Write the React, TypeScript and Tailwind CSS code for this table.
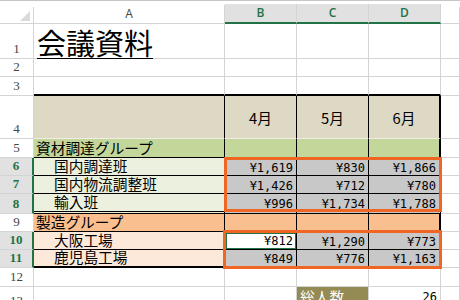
import type { ReactNode } from 'react';

// Excel-like sheet: 会議資料

const grid = 'border-r border-r-[#d4d4d4]';
const gridB = 'border-b border-b-[#d4d4d4]';
const blackR = 'border-r border-r-black';
const blackB = 'border-b border-b-black';
const thickR = 'border-r-2 border-r-black';

type CellProps = {
  w: string;
  r?: string;
  b?: string;
  bg?: string;
  className?: string;
  children?: ReactNode;
};

function Cell({ w, r = grid, b = gridB, bg = 'bg-white', className = '', children }: CellProps) {
  return <div className={`${w} ${r} ${b} ${bg} shrink-0 flex ${className}`}>{children}</div>;
}

function RowNum({ n, sel }: { n: number; sel?: boolean }) {
  return (
    <Cell
      w="w-[34px]"
      r={sel ? 'border-r-2 border-r-[#217346]' : grid}
      bg={sel ? 'bg-[#e1e1e1]' : 'bg-white'}
      className={`items-end justify-center pb-[2px] text-[13px] leading-[14px] font-['Liberation_Serif',serif] ${
        sel ? 'text-[#217346] font-bold' : 'text-[#444444]'
      }`}
    >
      {n}
    </Cell>
  );
}

function Yen({ v, r = blackR, b = blackB, bg = 'bg-[#c8c8c8]' }: { v: string; r?: string; b?: string; bg?: string }) {
  return (
    <Cell
      w="w-[72px]"
      r={r}
      b={b}
      bg={bg}
      className="items-end justify-end pr-[3px] text-[12px] leading-[13px] font-['DejaVu_Sans_Mono',monospace]"
    >
      {v}
    </Cell>
  );
}

function Label({ text, bg, b = blackB, indent }: { text: string; bg: string; b?: string; indent?: boolean }) {
  return (
    <Cell
      w="w-[191px]"
      r={blackR}
      b={b}
      bg={bg}
      className={`items-end pb-[2px] text-[14.7px] leading-[15px] ${indent ? 'pl-[20px]' : 'pl-[2px]'}`}
    >
      {text}
    </Cell>
  );
}

function Blank({ w = 'w-[72px]', r = grid, b = gridB, bg = 'bg-white' }: { w?: string; r?: string; b?: string; bg?: string }) {
  return <Cell w={w} r={r} b={b} bg={bg} />;
}

function ColHead({ label, w, sel }: { label?: string; w: string; sel?: boolean }) {
  return (
    <div className={`${w} shrink-0 flex flex-col border-t border-t-[#c6c6c6]`}>
      <div className="h-[6px]" />
      <div
        className={`flex-1 flex items-center justify-center text-[12px] font-['Open_Sans',sans-serif] border-r border-r-[#d4d4d4] ${
          sel
            ? 'bg-[#e1e1e1] text-[#217346] font-semibold border-b-2 border-b-[#217346]'
            : 'bg-white text-[#444444] border-b border-b-[#d4d4d4]'
        }`}
      >
        {label}
      </div>
    </div>
  );
}

const rows = [
  { n: 6, label: '国内調達班', vals: ['¥1,619', '¥830', '¥1,866'], bg: 'bg-[#ebf1de]', h: 'h-[18px]', b: blackB },
  { n: 7, label: '国内物流調整班', vals: ['¥1,426', '¥712', '¥780'], bg: 'bg-[#ebf1de]', h: 'h-[18px]', b: blackB },
  {
    n: 8,
    label: '輸入班',
    vals: ['¥996', '¥1,734', '¥1,788'],
    bg: 'bg-[#ebf1de]',
    h: 'h-[20px]',
    b: 'border-b-[3px] border-double border-b-black',
  },
];

export default function App() {
  return (
    <div className="relative w-[460px] h-[300px] overflow-hidden bg-white text-black font-['Noto_Sans_CJK_JP',sans-serif]">
      {/* column headers */}
      <div className="flex h-[24px]">
        <div className="w-[34px] shrink-0 flex flex-col border-t border-t-[#c6c6c6]">
          <div className="h-[6px]" />
          <div className="flex-1 flex items-end justify-end pr-[3px] pb-[2px] border-r border-r-[#d4d4d4] border-b border-b-[#d4d4d4]">
            <svg width="10" height="10" viewBox="0 0 10 10">
              <polygon points="10,0 10,10 0,10" fill="#dadada" />
            </svg>
          </div>
        </div>
        <ColHead label="A" w="w-[191px]" />
        <ColHead label="B" w="w-[72px]" sel />
        <ColHead label="C" w="w-[72px]" sel />
        <ColHead label="D" w="w-[72px]" sel />
        <ColHead w="w-[19px]" />
        <div className="flex-1 border-t border-t-[#c6c6c6]" />
      </div>

      {/* row 1 title */}
      <div className="flex h-[35px]">
        <RowNum n={1} />
        <Cell w="w-[191px]" className="items-end pl-[3px] pb-[1px]">
          <span className="text-[29px] leading-[29px] underline underline-offset-[3px] decoration-1 whitespace-nowrap">
            会議資料
          </span>
        </Cell>
        <Blank />
        <Blank />
        <Blank />
        <Blank w="w-[19px]" />
      </div>

      {/* rows 2-3 */}
      <div className="flex h-[18px]">
        <RowNum n={2} />
        <Blank w="w-[191px]" />
        <Blank />
        <Blank />
        <Blank />
        <Blank w="w-[19px]" />
      </div>
      <div className="flex h-[19px]">
        <RowNum n={3} />
        <Blank w="w-[191px]" b="border-b-2 border-b-black" />
        <Blank b="border-b-2 border-b-black" />
        <Blank b="border-b-2 border-b-black" />
        <Blank b="border-b-2 border-b-black" />
        <Blank w="w-[19px]" />
      </div>

      {/* row 4 months */}
      <div className="flex h-[43px]">
        <RowNum n={4} />
        <Blank w="w-[191px]" r={blackR} b="border-b border-b-[#efede4]" bg="bg-[#ddd9c4]" />
        {['4月', '5月', '6月'].map((m, i) => (
          <Cell
            key={m}
            w="w-[72px]"
            r={i === 2 ? thickR : blackR}
            b="border-b border-b-[#efede4]"
            bg="bg-[#ddd9c4]"
            className="items-center justify-center text-[14.7px] leading-[15px]"
          >
            {m}
          </Cell>
        ))}
        <Blank w="w-[19px]" />
      </div>

      {/* row 5 */}
      <div className="flex h-[19px]">
        <RowNum n={5} />
        <Label text="資材調達グループ" bg="bg-[#c4d79b]" />
        <Blank r={blackR} b={blackB} bg="bg-[#c4d79b]" />
        <Blank r={blackR} b={blackB} bg="bg-[#c4d79b]" />
        <Blank r={thickR} b={blackB} bg="bg-[#c4d79b]" />
        <Blank w="w-[19px]" />
      </div>

      {/* rows 6-8 */}
      {rows.map((row) => (
        <div key={row.n} className={`flex ${row.h}`}>
          <RowNum n={row.n} sel />
          <Label text={row.label} bg={row.bg} b={row.b} indent />
          <Yen v={row.vals[0]} b={row.b} />
          <Yen v={row.vals[1]} b={row.b} />
          <Yen v={row.vals[2]} b={row.b} r={thickR} />
          <Blank w="w-[19px]" />
        </div>
      ))}

      {/* row 9 */}
      <div className="flex h-[18px]">
        <RowNum n={9} />
        <Label text="製造グループ" bg="bg-[#fabf8f]" />
        <Blank r={blackR} b={blackB} bg="bg-[#fabf8f]" />
        <Blank r={blackR} b={blackB} bg="bg-[#fabf8f]" />
        <Blank r={thickR} b={blackB} bg="bg-[#fabf8f]" />
        <Blank w="w-[19px]" />
      </div>

      {/* row 10 */}
      <div className="flex h-[18px]">
        <RowNum n={10} sel />
        <Label text="大阪工場" bg="bg-[#fde9d9]" indent />
        <Cell w="w-[72px]" r={blackR} b={blackB} className="pl-[1px] pt-[1px]">
          <div className="flex-1 flex items-end justify-end pr-[2px] border border-[#217346] text-[12px] leading-[13px] font-['DejaVu_Sans_Mono',monospace]">
            ¥812
          </div>
        </Cell>
        <Yen v="¥1,290" />
        <Yen v="¥773" r={thickR} />
        <Blank w="w-[19px]" />
      </div>

      {/* row 11 */}
      <div className="flex h-[18px]">
        <RowNum n={11} sel />
        <Label text="鹿児島工場" bg="bg-[#fde9d9]" b="border-b-2 border-b-black" indent />
        <Yen v="¥849" b="border-b-2 border-b-black" />
        <Yen v="¥776" b="border-b-2 border-b-black" />
        <Yen v="¥1,163" b="border-b-2 border-b-black" r={thickR} />
        <Blank w="w-[19px]" />
      </div>

      {/* row 12 */}
      <div className="flex h-[19px]">
        <RowNum n={12} />
        <Blank w="w-[191px]" />
        <Blank />
        <Blank />
        <Blank />
        <Blank w="w-[19px]" />
      </div>

      {/* row 13 */}
      <div className="flex h-[24px]">
        <RowNum n={13} />
        <Blank w="w-[191px]" />
        <Blank />
        <Cell w="w-[72px]" bg="bg-[#948a54]" className="items-start pl-[3px] pt-[2px] text-[14.7px] leading-[15px] text-white">
          総人数
        </Cell>
        <Cell w="w-[72px]" className="items-start justify-end pr-[3px] pt-[4px] text-[12px] leading-[13px] font-['DejaVu_Sans_Mono',monospace]">
          26
        </Cell>
        <Blank w="w-[19px]" />
      </div>

      {/* orange annotation boxes */}
      <div className="absolute left-[224px] top-[157px] w-[218px] h-[55px] border-[3px] border-[#ef6625]" />
      <div className="absolute left-[223px] top-[230px] w-[219px] h-[39px] border-[3px] border-[#ef6625]" />
    </div>
  );
}
